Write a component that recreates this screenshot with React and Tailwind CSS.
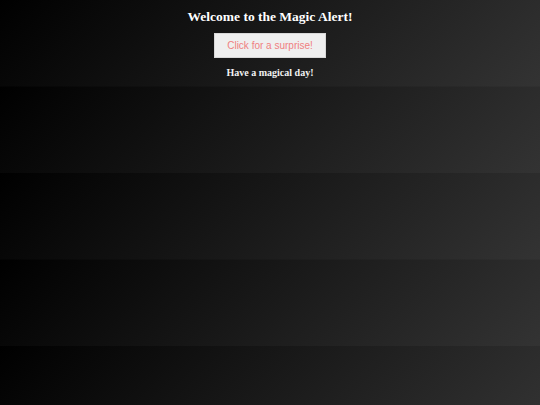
import React from 'react';

const App = () => {
    return (
        <div className="h-[405px] w-full overflow-hidden bg-[linear-gradient(135deg,#000000,#333333)] bg-[length:100%_86.5px] bg-repeat [font-family:'Liberation_Serif',serif]">
            <div className="flex flex-col items-center pt-[10px]">
                <h1 className="text-[13.5px] leading-[13.5px] font-bold text-white">Welcome to the Magic Alert!</h1>
                <button className="mt-[9.5px] h-[25px] w-[112px] border border-[#d8d8d8] bg-[#efefef] text-[10px] text-[#f08080] [font-family:'Liberation_Sans',Arial,sans-serif]">
                    Click for a surprise!
                </button>
                <p className="mt-[9.5px] text-[10px] leading-[10px] font-bold text-[#f2f2f2]">Have a magical day!</p>
            </div>
        </div>
    );
};

export default App;
